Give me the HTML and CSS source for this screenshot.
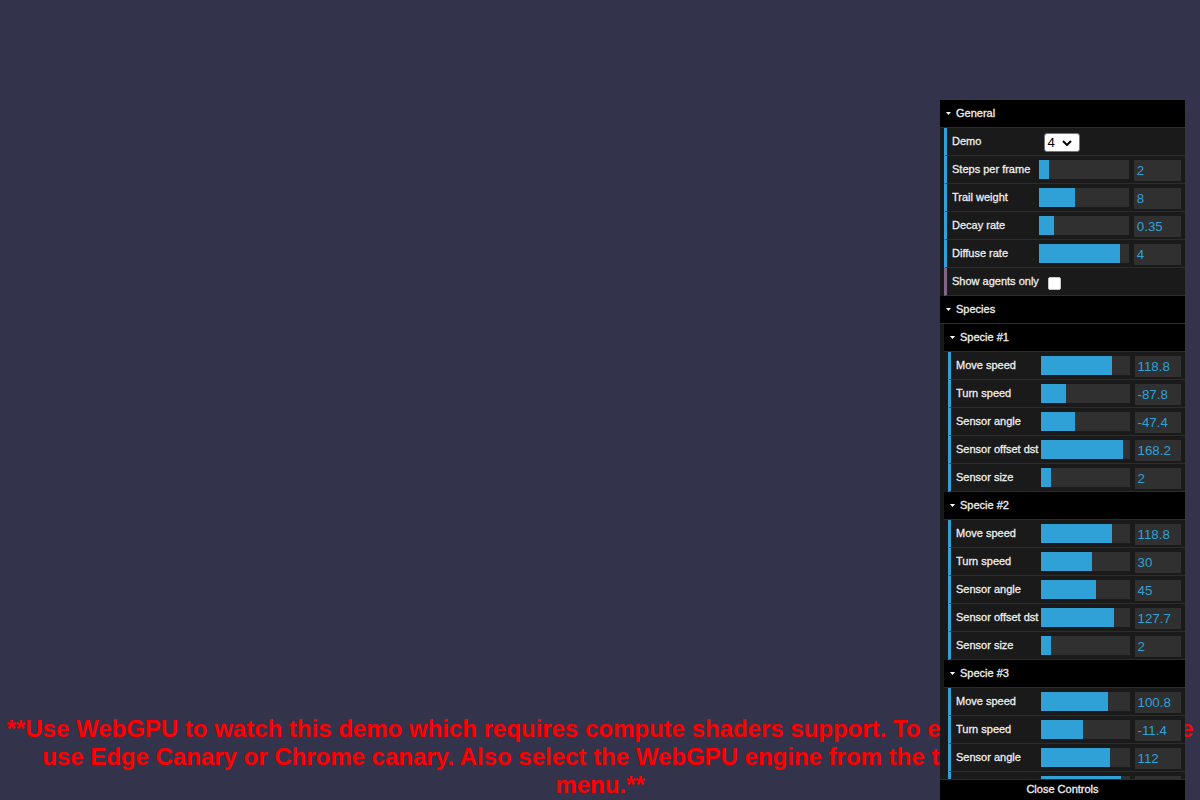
FILE: index.html
```html
<!DOCTYPE html>
<html>
<head>
<meta charset="utf-8">
<title>WebGPU demo</title>
<link rel="stylesheet" href="styles.css">
</head>
<body>
<div class="stage">
  <div class="notice">**Use WebGPU to watch this demo which requires compute shaders support. To enable WebGPU please use Edge Canary or Chrome canary. Also select the WebGPU engine from the top right drop down menu.**</div>
</div>

<div class="gui">
  <div class="scroll">
    <div class="folder">
      <div class="title"><svg class="tri" width="5" height="3" viewBox="0 0 5 3"><polygon points="0,0 5,0 2.5,3" fill="#fff"/></svg>General</div>
      <div class="row">
        <div class="name">Demo</div>
        <div class="c"><div class="select"><span>4</span><svg class="chev" width="10" height="6" viewBox="0 0 10 6"><polyline points="1,1 5,5 9,1" fill="none" stroke="#000" stroke-width="2"/></svg></div></div>
      </div>
      <div class="row">
        <div class="name">Steps per frame</div>
        <div class="c"><div class="slider"><div class="fill" style="width:11%"></div></div><div class="val">2</div></div>
      </div>
      <div class="row">
        <div class="name">Trail weight</div>
        <div class="c"><div class="slider"><div class="fill" style="width:40%"></div></div><div class="val">8</div></div>
      </div>
      <div class="row">
        <div class="name">Decay rate</div>
        <div class="c"><div class="slider"><div class="fill" style="width:17%"></div></div><div class="val">0.35</div></div>
      </div>
      <div class="row">
        <div class="name">Diffuse rate</div>
        <div class="c"><div class="slider"><div class="fill" style="width:89.5%"></div></div><div class="val">4</div></div>
      </div>
      <div class="row bool">
        <div class="name">Show agents only</div>
        <div class="c"><div class="check"></div></div>
      </div>
    </div>

    <div class="folder">
      <div class="title"><svg class="tri" width="5" height="3" viewBox="0 0 5 3"><polygon points="0,0 5,0 2.5,3" fill="#fff"/></svg>Species</div>

      <div class="folder">
        <div class="title"><svg class="tri" width="5" height="3" viewBox="0 0 5 3"><polygon points="0,0 5,0 2.5,3" fill="#fff"/></svg>Specie #1</div>
        <div class="row">
          <div class="name">Move speed</div>
          <div class="c"><div class="slider"><div class="fill" style="width:80%"></div></div><div class="val">118.8</div></div>
        </div>
        <div class="row">
          <div class="name">Turn speed</div>
          <div class="c"><div class="slider"><div class="fill" style="width:28%"></div></div><div class="val">-87.8</div></div>
        </div>
        <div class="row">
          <div class="name">Sensor angle</div>
          <div class="c"><div class="slider"><div class="fill" style="width:38%"></div></div><div class="val">-47.4</div></div>
        </div>
        <div class="row">
          <div class="name">Sensor offset dst</div>
          <div class="c"><div class="slider"><div class="fill" style="width:92%"></div></div><div class="val">168.2</div></div>
        </div>
        <div class="row">
          <div class="name">Sensor size</div>
          <div class="c"><div class="slider"><div class="fill" style="width:11.5%"></div></div><div class="val">2</div></div>
        </div>
      </div>

      <div class="folder">
        <div class="title"><svg class="tri" width="5" height="3" viewBox="0 0 5 3"><polygon points="0,0 5,0 2.5,3" fill="#fff"/></svg>Specie #2</div>
        <div class="row">
          <div class="name">Move speed</div>
          <div class="c"><div class="slider"><div class="fill" style="width:80%"></div></div><div class="val">118.8</div></div>
        </div>
        <div class="row">
          <div class="name">Turn speed</div>
          <div class="c"><div class="slider"><div class="fill" style="width:57%"></div></div><div class="val">30</div></div>
        </div>
        <div class="row">
          <div class="name">Sensor angle</div>
          <div class="c"><div class="slider"><div class="fill" style="width:62%"></div></div><div class="val">45</div></div>
        </div>
        <div class="row">
          <div class="name">Sensor offset dst</div>
          <div class="c"><div class="slider"><div class="fill" style="width:82%"></div></div><div class="val">127.7</div></div>
        </div>
        <div class="row">
          <div class="name">Sensor size</div>
          <div class="c"><div class="slider"><div class="fill" style="width:11.5%"></div></div><div class="val">2</div></div>
        </div>
      </div>

      <div class="folder">
        <div class="title"><svg class="tri" width="5" height="3" viewBox="0 0 5 3"><polygon points="0,0 5,0 2.5,3" fill="#fff"/></svg>Specie #3</div>
        <div class="row">
          <div class="name">Move speed</div>
          <div class="c"><div class="slider"><div class="fill" style="width:75%"></div></div><div class="val">100.8</div></div>
        </div>
        <div class="row">
          <div class="name">Turn speed</div>
          <div class="c"><div class="slider"><div class="fill" style="width:47%"></div></div><div class="val">-11.4</div></div>
        </div>
        <div class="row">
          <div class="name">Sensor angle</div>
          <div class="c"><div class="slider"><div class="fill" style="width:78%"></div></div><div class="val">112</div></div>
        </div>
        <div class="row">
          <div class="name">Sensor offset dst</div>
          <div class="c"><div class="slider"><div class="fill" style="width:90%"></div></div><div class="val">150.3</div></div>
        </div>
        <div class="row">
          <div class="name">Sensor size</div>
          <div class="c"><div class="slider"><div class="fill" style="width:11.5%"></div></div><div class="val">2</div></div>
        </div>
      </div>
    </div>
  </div>
  <div class="close">Close Controls</div>
</div>
</body>
</html>
```

FILE: styles.css
```css
html, body {
  margin: 0;
  padding: 0;
}

body {
  background: #33334c;
  width: 1200px;
  height: 800px;
  overflow: hidden;
  position: relative;
  font-family: "Liberation Sans", Arial, sans-serif;
}

.stage {
  height: 800px;
  display: flex;
  flex-direction: column;
  justify-content: flex-end;
}

.notice {
  color: #ff0000;
  font: bold 24px "Liberation Sans", Arial, sans-serif;
  text-align: center;
  padding-bottom: 1px;
}

.gui {
  position: absolute;
  top: 100px;
  right: 15px;
  width: 245px;
  height: 700px;
  background: #1a1a1a;
  display: flex;
  flex-direction: column;
  font: 11px "Liberation Sans", Arial, sans-serif;
  color: #eee;
  text-shadow: 0 -1px 0 #111;
  -webkit-text-stroke: 0.3px #eee;
}

.scroll {
  flex: 1;
  overflow: hidden;
}

.folder {
  padding-left: 4px;
}

.title {
  margin-left: -4px;
  height: 27px;
  line-height: 27px;
  background: #000;
  border-bottom: 1px solid #2c2c2c;
  display: flex;
  align-items: center;
  padding-left: 6px;
}

.tri {
  display: block;
  margin-right: 5px;
  flex: none;
}

.row {
  display: flex;
  align-items: flex-start;
  height: 27px;
  padding: 0 4px 0 5px;
  background: #1a1a1a;
  border-bottom: 1px solid #2c2c2c;
  border-left: 3px solid #2fa1d6;
}

.row.bool {
  border-left-color: #806787;
}

.name {
  width: 40%;
  flex: none;
  line-height: 27px;
  white-space: nowrap;
  overflow: hidden;
}

.c {
  width: 60%;
  flex: none;
  display: flex;
  align-items: flex-start;
}

.slider {
  width: 66%;
  flex: none;
  margin-left: -5px;
  margin-top: 4px;
  height: 19px;
  background: #303030;
}

.fill {
  height: 100%;
  background: #2fa1d6;
}

.val {
  width: 30%;
  flex: none;
  margin-left: auto;
  margin-top: 4px;
  padding: 3px;
  height: 15px;
  line-height: 15px;
  background: #303030;
  color: #2fa1d6;
  font-size: 13.333px;
  text-shadow: none;
  -webkit-text-stroke: 0;
  white-space: nowrap;
  overflow: hidden;
}

.select {
  margin-top: 5px;
  width: 36px;
  height: 19px;
  box-sizing: border-box;
  background: #fff;
  border: 1px solid #767676;
  border-radius: 3px;
  display: flex;
  align-items: center;
  padding-left: 3px;
  color: #000;
  font-size: 13.333px;
  text-shadow: none;
  -webkit-text-stroke: 0;
}

.chev {
  display: block;
  margin-left: auto;
  margin-right: 7px;
}

.check {
  width: 13px;
  height: 13px;
  box-sizing: border-box;
  margin: 9px 0 0 4px;
  background: #fff;
  border: 1px solid #c8c8c8;
  border-radius: 2px;
}

.close {
  flex: none;
  height: 20px;
  line-height: 19px;
  background: #000;
  border-top: 1px solid #2c2c2c;
  text-align: center;
}
```
